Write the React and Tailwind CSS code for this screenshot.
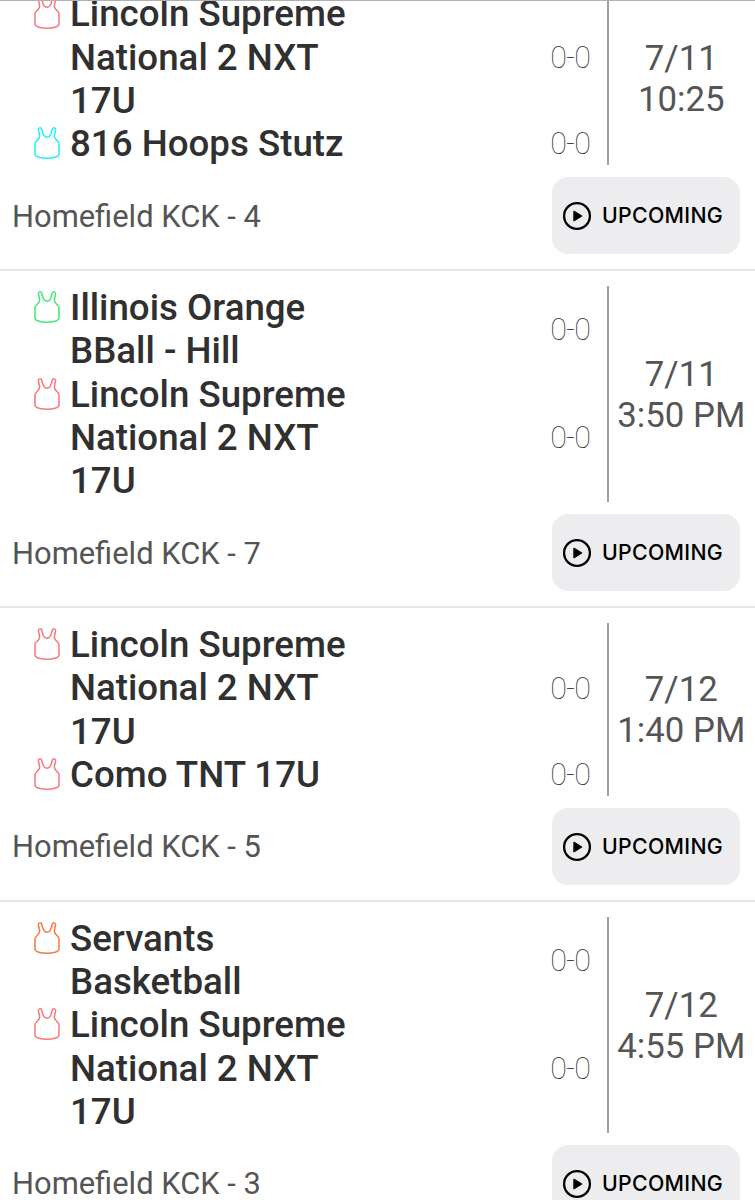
const games = [
  {
    teams: [
      { lines: ['Lincoln Supreme', 'National 2 NXT', '17U'], color: '#f5787c', record: '0-0' },
      { lines: ['816 Hoops Stutz'], color: '#1ff0f5', record: '0-0' },
    ],
    date: '7/11',
    time: '10:25',
    venue: 'Homefield KCK - 4',
  },
  {
    teams: [
      { lines: ['Illinois Orange', 'BBall - Hill'], color: '#3fe878', record: '0-0' },
      { lines: ['Lincoln Supreme', 'National 2 NXT', '17U'], color: '#f5787c', record: '0-0' },
    ],
    date: '7/11',
    time: '3:50 PM',
    venue: 'Homefield KCK - 7',
  },
  {
    teams: [
      { lines: ['Lincoln Supreme', 'National 2 NXT', '17U'], color: '#f5787c', record: '0-0' },
      { lines: ['Como TNT 17U'], color: '#f5787c', record: '0-0' },
    ],
    date: '7/12',
    time: '1:40 PM',
    venue: 'Homefield KCK - 5',
  },
  {
    teams: [
      { lines: ['Servants', 'Basketball'], color: '#f57a45', record: '0-0' },
      { lines: ['Lincoln Supreme', 'National 2 NXT', '17U'], color: '#f5787c', record: '0-0' },
    ],
    date: '7/12',
    time: '4:55 PM',
    venue: 'Homefield KCK - 3',
  },
];

function JerseyIcon({ color }) {
  return (
    <svg width="26" height="34" viewBox="0 0 26 34" fill="none" stroke={color} strokeWidth="1.5" strokeLinejoin="round" className="mt-1 shrink-0">
      <path d="M4.4 3.8C4 1.8 6.9 1 7.6 2.9C8.4 5.2 8.7 7.4 9.6 9C10.4 10.6 11.6 11.2 13 11.2C14.4 11.2 15.6 10.6 16.4 9C17.3 7.4 17.6 5.2 18.4 2.9C19.1 1 22 1.8 21.6 3.8C21.1 6.6 20.2 8.6 20.4 10.6C20.7 13.6 25 15.2 25 17.6V28C25 31 18.5 32.3 13 32.3C7.5 32.3 1 31 1 28V17.6C1 15.2 5.3 13.6 5.6 10.6C5.8 8.6 4.9 6.6 4.4 3.8Z" />
    </svg>
  );
}

function PlayIcon() {
  return (
    <svg width="30" height="30" viewBox="0 0 30 30" className="shrink-0">
      <circle cx="15" cy="15" r="12.9" fill="none" stroke="#000" strokeWidth="2.3" />
      <path d="M12 10.4L19.6 15L12 19.6Z" fill="#000" stroke="#000" strokeWidth="1.4" strokeLinejoin="round" />
    </svg>
  );
}

function TeamRow({ team }) {
  return (
    <div className="flex">
      <JerseyIcon color={team.color} />
      <div className="ml-[10px] w-[440px] text-[36.7px] leading-[43.2px] font-medium text-[#303030]">
        {team.lines.map((line) => (
          <div key={line} className="whitespace-nowrap">{line}</div>
        ))}
      </div>
      <div className="flex w-[97px] items-center justify-center pt-[2px] pl-[24px] text-[30.5px] leading-none font-thin tracking-[-0.9px] text-[#333]">
        {team.record}
      </div>
    </div>
  );
}

function GameCard({ game }) {
  return (
    <section className="shrink-0 border-b-2 border-[#e6e6e6] pt-[15px] pb-[15px]">
      <div className="flex">
        <div className="w-[606.6px] shrink-0 pl-[34px]">
          {game.teams.map((team) => (
            <TeamRow key={team.lines[0]} team={team} />
          ))}
        </div>
        <div className="flex flex-1 flex-col items-center justify-center border-l-2 border-[#a0a0a0] pt-px pr-px text-[34.8px] leading-[41px] whitespace-nowrap text-[#555]">
          <div>{game.date}</div>
          <div>{game.time}</div>
        </div>
      </div>
      <div className="mt-3 flex items-center justify-between pr-[15px] pl-3">
        <div className="pt-[2px] text-[30.9px] text-[#555]">{game.venue}</div>
        <button className="flex h-[77px] w-[188px] items-center rounded-2xl bg-[#ededef] pl-[10px]">
          <PlayIcon />
          <span className="ml-[10px] pt-px font-['Inter'] text-[21.3px] font-medium tracking-[0.3px] text-black">UPCOMING</span>
        </button>
      </div>
    </section>
  );
}

export default function App() {
  return (
    <div className="flex h-[1200px] w-[755px] flex-col overflow-hidden border-t border-[#b0b0b0] bg-white font-['Roboto',sans-serif]">
      {/* List is scrolled, so the first game starts above the top edge */}
      <div className="-mt-[23.6px] flex flex-col">
        {games.map((game) => (
          <GameCard key={game.venue} game={game} />
        ))}
      </div>
    </div>
  );
}
